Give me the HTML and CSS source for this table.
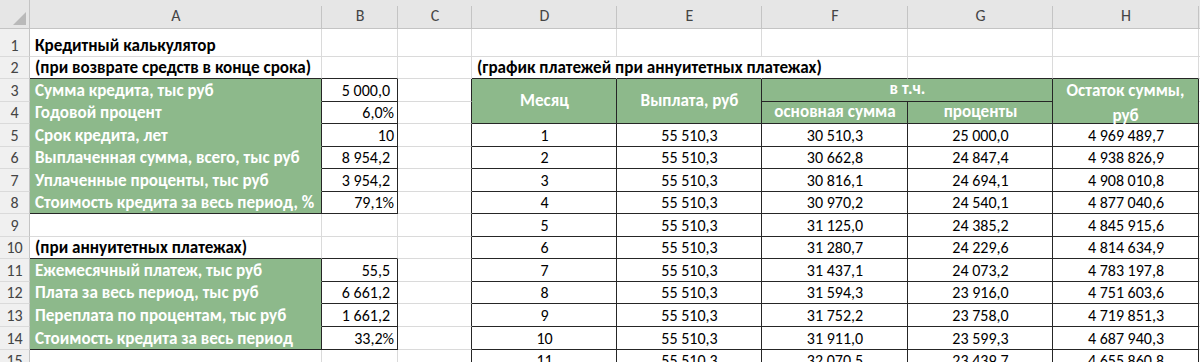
FILE: index.html
```html
<!DOCTYPE html>
<html lang="ru">
<head>
<meta charset="utf-8">
<title>Кредитный калькулятор</title>
<link rel="stylesheet" href="styles.css">
</head>
<body>
<div class="sheet">
  <!-- column headers -->
  <div class="corner"><svg width="30" height="29" viewBox="0 0 30 29"><polygon points="13,25 26,25 26,12" fill="#b9b9b9"/></svg></div>
  <div class="ch">A</div><div class="ch">B</div><div class="ch">C</div><div class="ch">D</div><div class="ch">E</div><div class="ch">F</div><div class="ch">G</div><div class="ch">H</div><div class="ch"></div>

  <!-- row 1 -->
  <div class="rh">1</div>
  <div class="c b">Кредитный калькулятор</div><div class="c"></div><div class="c"></div><div class="c"></div><div class="c"></div><div class="c"></div><div class="c"></div><div class="c"></div><div class="c"></div>

  <!-- row 2 -->
  <div class="rh">2</div>
  <div class="c b db">(при возврате средств в конце срока)</div><div class="c db"></div><div class="c"></div>
  <div class="c b db nr">(график платежей при аннуитетных платежах)</div><div class="c db nr"></div><div class="c db"></div><div class="c db"></div><div class="c db"></div><div class="c"></div>

  <!-- row 3 -->
  <div class="rh">3</div>
  <div class="c g dr">Сумма кредита, тыс руб</div><div class="c n dr db">5 000,0</div><div class="c dr"></div>
  <div class="c gh dr db r2">Месяц</div>
  <div class="c gh dr db r2">Выплата, руб</div>
  <div class="c gh dr db c2">в т.ч.</div>
  <div class="c gh dr db r2 wrap">Остаток суммы, руб</div>
  <div class="c"></div>

  <!-- row 4 -->
  <div class="rh">4</div>
  <div class="c g dr">Годовой процент</div><div class="c n p dr db">6,0%</div><div class="c dr"></div>
  <div class="c gh dr db">основная сумма</div>
  <div class="c gh dr db">проценты</div>
  <div class="c"></div>

  <!-- row 5 -->
  <div class="rh">5</div>
  <div class="c g dr">Срок кредита, лет</div><div class="c n p dr db">10</div><div class="c dr"></div>
  <div class="c m dr db">1</div><div class="c m dr db">55 510,3</div><div class="c m dr db">30 510,3</div><div class="c m dr db">25 000,0</div><div class="c m dr db">4 969 489,7</div><div class="c"></div>

  <!-- row 6 -->
  <div class="rh">6</div>
  <div class="c g dr">Выплаченная сумма, всего, тыс руб</div><div class="c n dr db">8 954,2</div><div class="c dr"></div>
  <div class="c m dr db">2</div><div class="c m dr db">55 510,3</div><div class="c m dr db">30 662,8</div><div class="c m dr db">24 847,4</div><div class="c m dr db">4 938 826,9</div><div class="c"></div>

  <!-- row 7 -->
  <div class="rh">7</div>
  <div class="c g dr">Уплаченные проценты, тыс руб</div><div class="c n dr db">3 954,2</div><div class="c dr"></div>
  <div class="c m dr db">3</div><div class="c m dr db">55 510,3</div><div class="c m dr db">30 816,1</div><div class="c m dr db">24 694,1</div><div class="c m dr db">4 908 010,8</div><div class="c"></div>

  <!-- row 8 -->
  <div class="rh">8</div>
  <div class="c g dr db">Стоимость кредита за весь период, %</div><div class="c n p dr db">79,1%</div><div class="c dr"></div>
  <div class="c m dr db">4</div><div class="c m dr db">55 510,3</div><div class="c m dr db">30 970,2</div><div class="c m dr db">24 540,1</div><div class="c m dr db">4 877 040,6</div><div class="c"></div>

  <!-- row 9 -->
  <div class="rh">9</div>
  <div class="c"></div><div class="c"></div><div class="c dr"></div>
  <div class="c m dr db">5</div><div class="c m dr db">55 510,3</div><div class="c m dr db">31 125,0</div><div class="c m dr db">24 385,2</div><div class="c m dr db">4 845 915,6</div><div class="c"></div>

  <!-- row 10 -->
  <div class="rh">10</div>
  <div class="c b db">(при аннуитетных платежах)</div><div class="c db"></div><div class="c dr"></div>
  <div class="c m dr db">6</div><div class="c m dr db">55 510,3</div><div class="c m dr db">31 280,7</div><div class="c m dr db">24 229,6</div><div class="c m dr db">4 814 634,9</div><div class="c"></div>

  <!-- row 11 -->
  <div class="rh">11</div>
  <div class="c g dr">Ежемесячный платеж, тыс руб</div><div class="c n dr db">55,5</div><div class="c dr"></div>
  <div class="c m dr db">7</div><div class="c m dr db">55 510,3</div><div class="c m dr db">31 437,1</div><div class="c m dr db">24 073,2</div><div class="c m dr db">4 783 197,8</div><div class="c"></div>

  <!-- row 12 -->
  <div class="rh">12</div>
  <div class="c g dr">Плата за весь период, тыс руб</div><div class="c n dr db">6 661,2</div><div class="c dr"></div>
  <div class="c m dr db">8</div><div class="c m dr db">55 510,3</div><div class="c m dr db">31 594,3</div><div class="c m dr db">23 916,0</div><div class="c m dr db">4 751 603,6</div><div class="c"></div>

  <!-- row 13 -->
  <div class="rh">13</div>
  <div class="c g dr">Переплата по процентам, тыс руб</div><div class="c n dr db">1 661,2</div><div class="c dr"></div>
  <div class="c m dr db">9</div><div class="c m dr db">55 510,3</div><div class="c m dr db">31 752,2</div><div class="c m dr db">23 758,0</div><div class="c m dr db">4 719 851,3</div><div class="c"></div>

  <!-- row 14 -->
  <div class="rh">14</div>
  <div class="c g dr db">Стоимость кредита за весь период</div><div class="c n p dr db">33,2%</div><div class="c dr"></div>
  <div class="c m dr db">10</div><div class="c m dr db">55 510,3</div><div class="c m dr db">31 911,0</div><div class="c m dr db">23 599,3</div><div class="c m dr db">4 687 940,3</div><div class="c"></div>

  <!-- row 15 -->
  <div class="rh">15</div>
  <div class="c"></div><div class="c"></div><div class="c dr"></div>
  <div class="c m dr db">11</div><div class="c m dr db">55 510,3</div><div class="c m dr db">32 070,5</div><div class="c m dr db">23 439,7</div><div class="c m dr db">4 655 860,8</div><div class="c"></div>
</div>
</body>
</html>
```

FILE: styles.css
```css
:root {
  --grid: #dadada;
  --dark: #262626;
  --green: #8db98b;
  --hdr: #e6e6e6;
  --rowhdr: #f0f0f0;
  --sep: #c4c4c4;
}

html, body {
  margin: 0;
  background: #ffffff;
  overflow: hidden;
}

body {
  width: 1200px;
  height: 362px;
}

.sheet {
  display: grid;
  grid-template-columns: 30px 292px 76px 74px 145px 145px 146px 145px 146px 100px;
  grid-template-rows: 29px 28px 22px repeat(13, 22.55px);
  font-family: Carlito, Lato, "Liberation Sans", sans-serif;
  font-size: 16px;
  color: #000;
}

.corner {
  box-sizing: border-box;
  background: var(--hdr);
  border-right: 1px solid var(--sep);
  border-bottom: 1px solid var(--sep);
  line-height: 0;
}

.ch {
  box-sizing: border-box;
  background: linear-gradient(var(--sep), var(--sep)) right bottom / 1px 22px no-repeat, var(--hdr);
  border-bottom: 1px solid var(--sep);
  display: flex;
  align-items: center;
  justify-content: center;
  padding-top: 3px;
  color: #444;
  font-size: 16px;
}

.rh {
  box-sizing: border-box;
  background: var(--rowhdr);
  border-right: 1px solid var(--sep);
  border-bottom: 1px solid var(--grid);
  display: flex;
  align-items: flex-end;
  justify-content: center;
  padding-bottom: 1px;
  line-height: 18px;
  color: #444;
}

.c {
  box-sizing: border-box;
  min-width: 0;
  border-right: 1px solid var(--grid);
  border-bottom: 1px solid var(--grid);
  display: flex;
  align-items: flex-end;
  padding: 0 4px 1px 5px;
  line-height: 18px;
  white-space: nowrap;
  overflow: visible;
}

.b {
  font-weight: 700;
  font-size: 17.1px;
}

.g {
  background: var(--green);
  color: #fff;
  font-weight: 700;
  font-size: 17.1px;
  border-bottom-color: var(--green);
}

.gh {
  background: var(--green);
  color: #fff;
  font-weight: 700;
  font-size: 17.1px;
  justify-content: center;
  align-items: center;
  text-align: center;
}

.n {
  justify-content: flex-end;
  padding-right: 7px;
}

.p { padding-right: 3px; }

.m { justify-content: center; }

.dr { border-right-color: var(--dark); }
.db { border-bottom-color: var(--dark); }
.nr { border-right-color: transparent; }

.r2 { grid-row: span 2; }
.c2 { grid-column: span 2; }

.wrap {
  white-space: normal;
  line-height: 25px;
  padding: 3px 2px 0;
}
```
